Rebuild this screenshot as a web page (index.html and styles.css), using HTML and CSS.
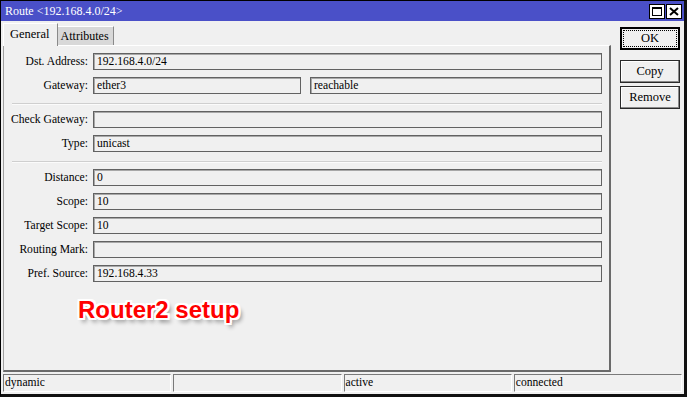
FILE: index.html
```html
<!DOCTYPE html>
<html lang="en">
<head>
  <meta charset="UTF-8" />
  <title>Route &lt;192.168.4.0/24&gt;</title>
  <link rel="stylesheet" href="styles.css">
</head>
<body>
  <div class="window">
    <div class="titlebar">
      <span class="title">Route &lt;192.168.4.0/24&gt;</span>
      <div class="title-buttons">
        <div class="tbtn">
          <svg width="14" height="13" viewBox="0 0 14 13"><rect x="2.5" y="2.5" width="9" height="8" fill="none" stroke="#000" stroke-width="1"/><rect x="2" y="2" width="10" height="2" fill="#000"/></svg>
        </div>
        <div class="tbtn">
          <svg width="14" height="13" viewBox="0 0 14 13"><path d="M3 3 L11 10 M11 3 L3 10" stroke="#000" stroke-width="2"/></svg>
        </div>
      </div>
    </div>

    <div class="content">
      <div class="main">
        <div class="tabs">
          <div class="tab active">General</div>
          <div class="tab">Attributes</div>
        </div>
        <div class="panel">
          <div class="row"><label>Dst. Address:</label><div class="field">192.168.4.0/24</div></div>
          <div class="row">
            <label>Gateway:</label>
            <div class="pair">
              <div class="field">ether3</div>
              <div class="field">reachable</div>
            </div>
          </div>
          <div class="sep"></div>
          <div class="row"><label>Check Gateway:</label><div class="field"></div></div>
          <div class="row"><label>Type:</label><div class="field">unicast</div></div>
          <div class="sep"></div>
          <div class="row"><label>Distance:</label><div class="field">0</div></div>
          <div class="row"><label>Scope:</label><div class="field">10</div></div>
          <div class="row"><label>Target Scope:</label><div class="field">10</div></div>
          <div class="row"><label>Routing Mark:</label><div class="field"></div></div>
          <div class="row"><label>Pref. Source:</label><div class="field">192.168.4.33</div></div>
          <div class="note">Router2 setup</div>
        </div>
      </div>

      <div class="side">
        <div class="btn default"><span>OK</span></div>
        <div class="btn gap">Copy</div>
        <div class="btn">Remove</div>
      </div>
    </div>

    <div class="status">
      <div class="cell">dynamic</div>
      <div class="cell"></div>
      <div class="cell">active</div>
      <div class="cell">connected</div>
    </div>
  </div>
</body>
</html>
```

FILE: styles.css
```css
body {
  margin: 0;
  font-family: 'Liberation Serif', 'Times New Roman', serif;
  font-size: 11.6px;
  color: #000;
  background: #f0f0f0;
}

.window {
  width: 687px;
  height: 397px;
  box-sizing: border-box;
  border-top: 1px solid #000;
  border-left: 1px solid #000;
  border-right: 3px solid #111;
  border-bottom: 3px solid #111;
  background: #f0f0f0;
  display: flex;
  flex-direction: column;
}

/* title bar */
.titlebar {
  height: 20px;
  background: #4a50c8;
  color: #fff;
  display: flex;
  align-items: center;
  justify-content: space-between;
  padding: 0 2px 0 4px;
  flex-shrink: 0;
}

.title {
  font-size: 12px;
  line-height: 20px;
}

.title-buttons {
  display: flex;
  gap: 1px;
}

.tbtn {
  width: 14px;
  height: 13px;
  background: #fff;
  border: 1px solid #000;
  display: flex;
}

/* body */
.content {
  height: 351px;
  display: flex;
  flex-shrink: 0;
}

.main {
  width: 608px;
  padding: 2px 0 0 2px;
  display: flex;
  flex-direction: column;
}

.tabs {
  display: flex;
  align-items: flex-end;
  height: 22px;
  position: relative;
  z-index: 1;
}

.tab {
  box-sizing: border-box;
  height: 19px;
  line-height: 18px;
  padding: 0 4px 0 3px;
  background: #d8d8d8;
  border-top: 1px solid #fff;
  border-right: 1px solid #8a8a8a;
  font-size: 12px;
}

.tab.active {
  height: 23px;
  line-height: 20px;
  padding: 0 7px 0 6px;
  background: #f0f0f0;
  border-left: 1px solid #fff;
  margin-bottom: -1px;
  font-size: 12.5px;
}

.panel {
  flex: 1;
  border-top: 1px solid #fff;
  border-left: 1px solid #a0a0a0;
  border-right: 2px solid #6a6a6a;
  border-bottom: 2px solid #6a6a6a;
  padding: 7px 7px 0 1px;
}

.row {
  display: grid;
  grid-template-columns: 83px 1fr;
  column-gap: 5px;
  height: 17px;
  margin-bottom: 7px;
}

.row label {
  text-align: right;
  line-height: 17px;
  white-space: nowrap;
}

.field {
  box-sizing: border-box;
  height: 17px;
  line-height: 15px;
  border: 1px solid #626262;
  box-shadow: inset 1px 1px 0 #a8a8a8;
  padding-left: 3px;
  white-space: nowrap;
}

.pair {
  display: grid;
  grid-template-columns: 208px 1fr;
  column-gap: 9px;
}

.sep {
  height: 0;
  margin: 9px 0 6px 7px;
  border-top: 1px solid #cfcfcf;
  border-bottom: 1px solid #fbfbfb;
}

.note {
  margin: 14px 0 0 73px;
  font-family: 'Liberation Sans', Arial, sans-serif;
  font-weight: bold;
  font-size: 24px;
  line-height: 28px;
  color: #ff0000;
  text-shadow:
    -2px -2px 0 #fff, 2px -2px 0 #fff, -2px 2px 0 #fff, 2px 2px 0 #fff,
    0 -2px 0 #fff, 0 2px 0 #fff, -2px 0 0 #fff, 2px 0 0 #fff,
    3px 4px 4px rgba(0,0,0,0.45);
}

/* side buttons */
.side {
  padding: 6px 0 0 9px;
  display: flex;
  flex-direction: column;
}

.btn {
  box-sizing: border-box;
  width: 60px;
  height: 23px;
  border: 1px solid #2a2a2a;
  box-shadow: inset -1px -1px 0 #8a8a8a, inset 1px 1px 0 #fff;
  text-align: center;
  line-height: 20px;
  font-size: 12.5px;
  margin-bottom: 3px;
}

.btn.default {
  border: 2px solid #000;
  padding: 1px;
  box-shadow: none;
}

.btn.default span {
  display: block;
  height: 15px;
  line-height: 15px;
  border: 1px dotted #000;
}

.btn.gap {
  margin-top: 7px;
}

/* status bar */
.status {
  height: 22px;
  box-sizing: border-box;
  padding: 2px;
  display: grid;
  grid-template-columns: repeat(4, 1fr);
  column-gap: 2px;
  flex-shrink: 0;
}

.cell {
  border-top: 1px solid #7a7a7a;
  border-left: 1px solid #7a7a7a;
  border-right: 1px solid #fff;
  border-bottom: 1px solid #fff;
  line-height: 16px;
  padding-left: 1px;
  white-space: nowrap;
}
```
